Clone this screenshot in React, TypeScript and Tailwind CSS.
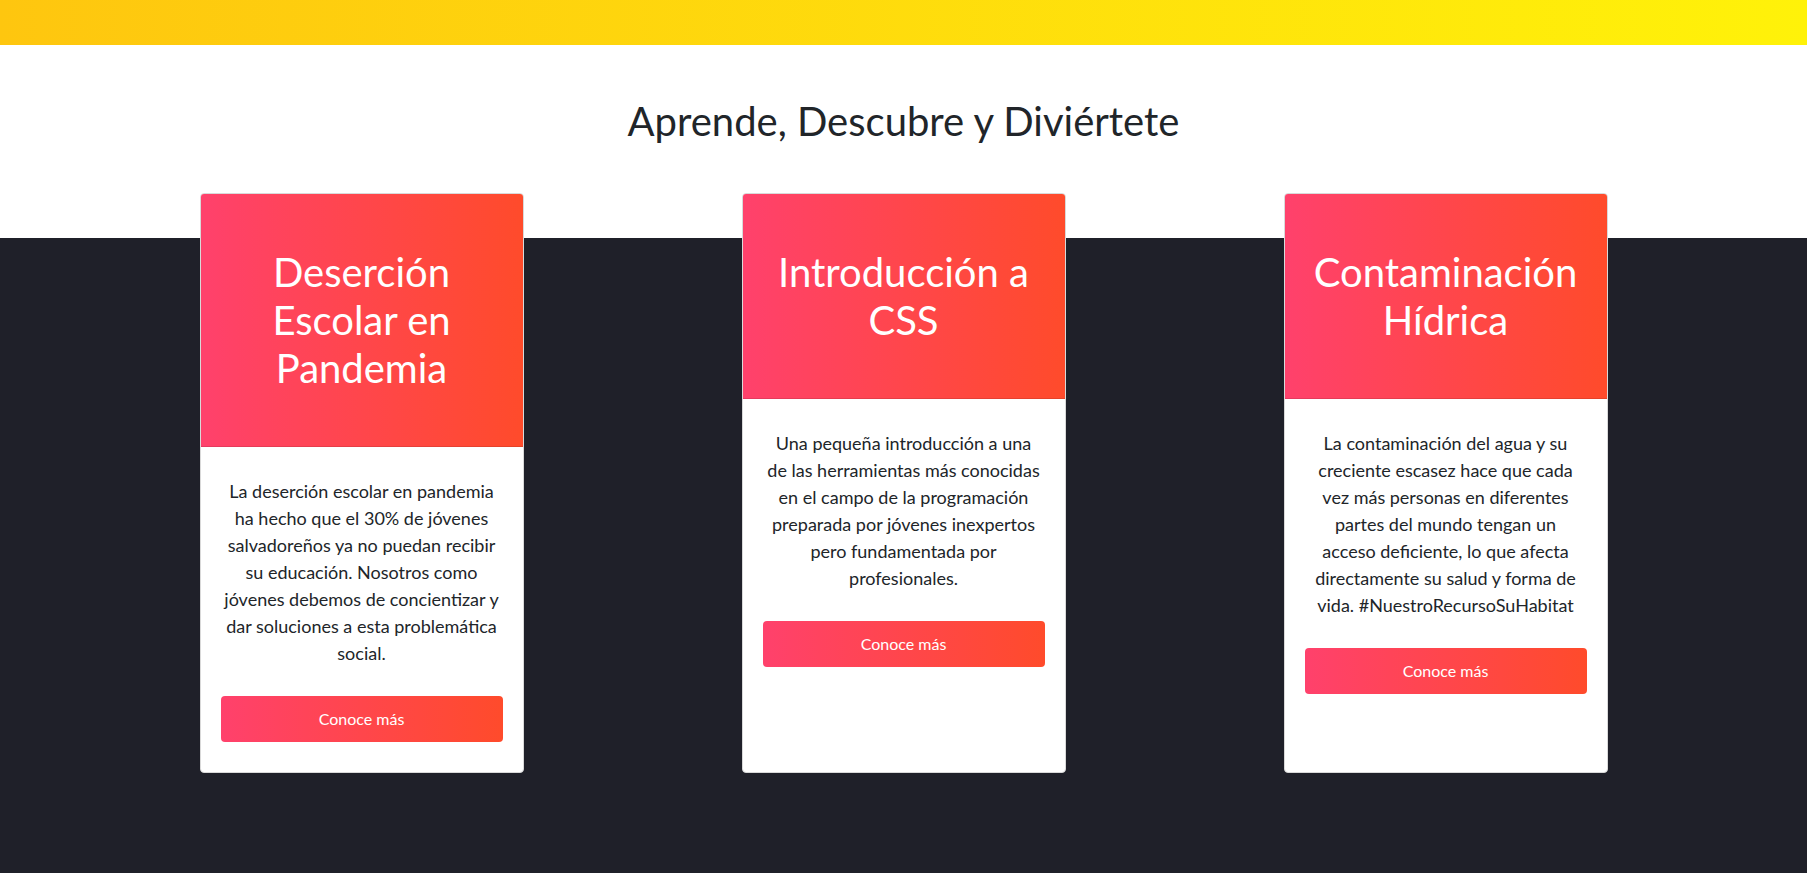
import React from 'react';

interface Course {
  title: string[];
  lines: string[];
}

const courses: Course[] = [
  {
    title: ['Deserción', 'Escolar en', 'Pandemia'],
    lines: [
      'La deserción escolar en pandemia',
      'ha hecho que el 30% de jóvenes',
      'salvadoreños ya no puedan recibir',
      'su educación. Nosotros como',
      'jóvenes debemos de concientizar y',
      'dar soluciones a esta problemática',
      'social.',
    ],
  },
  {
    title: ['Introducción a', 'CSS'],
    lines: [
      'Una pequeña introducción a una',
      'de las herramientas más conocidas',
      'en el campo de la programación',
      'preparada por jóvenes inexpertos',
      'pero fundamentada por',
      'profesionales.',
    ],
  },
  {
    title: ['Contaminación', 'Hídrica'],
    lines: [
      'La contaminación del agua y su',
      'creciente escasez hace que cada',
      'vez más personas en diferentes',
      'partes del mundo tengan un',
      'acceso deficiente, lo que afecta',
      'directamente su salud y forma de',
      'vida. #NuestroRecursoSuHabitat',
    ],
  },
];

const CourseCard = ({ course }: { course: Course }) => {
  return (
    <div className="w-[324px] flex flex-col bg-white border border-[#d9d9d9] rounded-[4px] overflow-hidden">
      <div className="py-[54px] px-4 bg-[linear-gradient(to_right,#ff416c,#ff4b2b)] border-b border-black/10 text-white text-center text-[40px] leading-[48px]">
        {course.title.map((t) => (
          <div key={t} className="whitespace-nowrap">{t}</div>
        ))}
      </div>
      <div className="flex flex-col px-[20px] pt-[31px] pb-[29px]">
        <p className="mb-[29px] text-center text-[18px] leading-[27px] text-[#212529]">
          {course.lines.map((l) => (
            <span key={l} className="block whitespace-nowrap">{l}</span>
          ))}
        </p>
        <button className="h-[46px] w-full rounded-[4px] bg-[linear-gradient(to_right,#ff416c,#ff4b2b)] text-white text-[16px]">
          Conoce más
        </button>
      </div>
    </div>
  );
};

export default function App() {
  return (
    <div className="min-h-screen flex flex-col bg-[#1f2029] font-['Lato','Liberation_Sans',sans-serif]">
      <div className="h-[45px] bg-[linear-gradient(to_right,#fec60f,#fff209)]" />
      <div className="bg-white pt-[52px] pb-[93px]">
        <h1 className="text-center text-[40px] leading-[48px] text-[#212529]">
          Aprende, Descubre y Diviértete
        </h1>
      </div>
      <div className="flex-1 flex justify-center gap-[218px] -mt-[45px] pb-[100px]">
        {courses.map((c) => (
          <CourseCard key={c.title.join(' ')} course={c} />
        ))}
      </div>
    </div>
  );
}
